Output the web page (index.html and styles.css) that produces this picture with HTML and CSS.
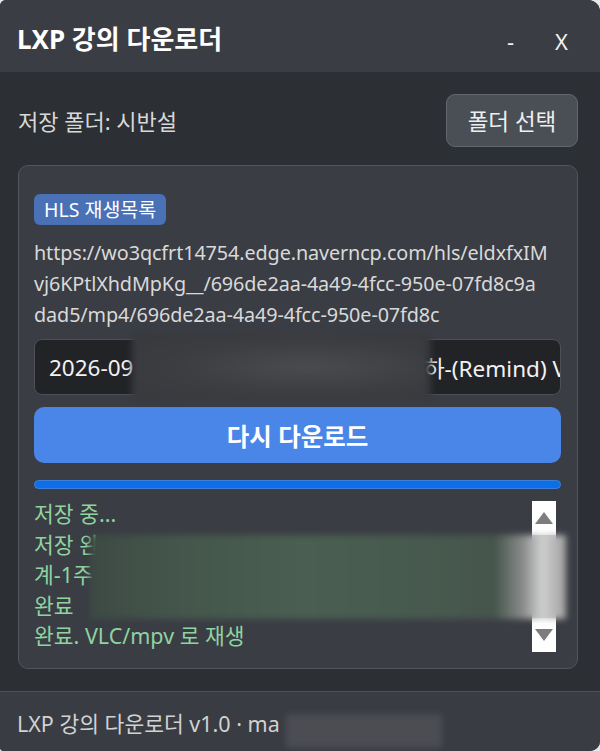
FILE: index.html
```html
<!DOCTYPE html>
<html lang="ko">
<head>
<meta charset="utf-8">
<link rel="stylesheet" href="styles.css">
</head>
<body>
<div class="window">
  <div class="titlebar">
    <div class="title">LXP 강의 다운로더</div>
    <div class="controls">
      <span class="ctl min">-</span>
      <span class="ctl close">X</span>
    </div>
  </div>
  <div class="main">
    <div class="folder-row">
      <div class="folder-label">저장 폴더: 시반설</div>
      <button class="folder-btn">폴더 선택</button>
    </div>
    <div class="card">
      <div class="badge">HLS 재생목록</div>
      <div class="url">
        <div class="url-line">https://wo3qcfrt14754.edge.naverncp.com/hls/eldxfxIM</div>
        <div class="url-line">vj6KPtlXhdMpKg__/696de2aa-4a49-4fcc-950e-07fd8c9a</div>
        <div class="url-line">dad5/mp4/696de2aa-4a49-4fcc-950e-07fd8c</div>
      </div>
      <div class="input-wrap">
        <div class="input"><span class="in-left">2026-09</span><span class="in-right">하-(Remind) V</span></div>
        <div class="blur blur-input"></div>
      </div>
      <button class="primary">다시 다운로드</button>
      <div class="progress"></div>
      <div class="log">
        <div class="log-lines">
          <div class="log-line">저장 중...</div>
          <div class="log-line">저장 완</div>
          <div class="log-line">계-1주</div>
          <div class="log-line">완료</div>
          <div class="log-line">완료. VLC/mpv 로 재생</div>
        </div>
        <div class="scrollbar">
          <div class="sb-btn"><span class="tri up"></span></div>
          <div class="sb-track"></div>
          <div class="sb-btn"><span class="tri down"></span></div>
        </div>
        <div class="blur blur-log"></div>
      </div>
    </div>
  </div>
  <div class="footer">
    <span>LXP 강의 다운로더 v1.0 · ma</span>
    <div class="blur blur-foot"></div>
  </div>
</div>
</body>
</html>
```
FILE: styles.css
```css
html, body {
  margin: 0;
  padding: 0;
  width: 600px;
  height: 751px;
  background: #e6e6e6;
  overflow: hidden;
}
body {
  font-family: "Segoe UI", "Noto Sans", "Noto Sans CJK KR", sans-serif;
}
.window {
  width: 600px;
  height: 751px;
  display: flex;
  flex-direction: column;
  background: #2c2f34;
  border-radius: 6px 12px 10px 4px;
  overflow: hidden;
  position: relative;
}
.titlebar {
  height: 72px;
  flex: none;
  background: #3a3d44;
  display: flex;
  align-items: center;
  padding: 4px 33px 0 17px;
  box-sizing: border-box;
}
.title {
  color: #ffffff;
  font-weight: 700;
  font-size: 26px;
  flex: 1;
  white-space: nowrap;
}
.controls {
  display: flex;
  color: #f0f0f0;
  font-size: 22px;
  padding-top: 6px;
}
.ctl.min {
  width: 48px;
}
.ctl.close {
  width: 12px;
}
.main {
  flex: 1;
  display: flex;
  flex-direction: column;
  padding: 22px 22px 0 18px;
}
.folder-row {
  display: flex;
  align-items: center;
  justify-content: space-between;
}
.folder-label {
  color: #d8d8d8;
  font-size: 22px;
  padding-bottom: 2px;
}
.folder-btn {
  width: 132px;
  height: 53px;
  background: #4a4e55;
  border: 1px solid #62666d;
  border-radius: 9px;
  color: #eeeeee;
  font-family: inherit;
  font-size: 22.5px;
  padding: 0;
}
.card {
  margin-top: 18px;
  height: 504px;
  box-sizing: border-box;
  background: #3a3d44;
  border: 1px solid #52555c;
  border-radius: 10px;
  padding: 28px 16px 0 15px;
  display: flex;
  flex-direction: column;
}
.badge {
  align-self: flex-start;
  height: 31px;
  line-height: 31px;
  background: #4a70b6;
  color: #ffffff;
  font-size: 19.5px;
  padding: 0 10px;
  border-radius: 6px;
  white-space: nowrap;
}
.url {
  margin-top: 12px;
  color: #d9d9d9;
  font-size: 19.8px;
  line-height: 31px;
  letter-spacing: -0.1px;
}
.url-line {
  white-space: nowrap;
}
.input-wrap {
  position: relative;
  margin-top: 9px;
}
.input {
  height: 56px;
  box-sizing: border-box;
  background: #222327;
  border: 1px solid #4d5057;
  border-radius: 8px;
  display: flex;
  align-items: center;
  justify-content: space-between;
  padding: 0 0 0 14px;
  color: #f2f2f2;
  font-size: 22.5px;
  overflow: hidden;
  white-space: nowrap;
}
.in-right {
  margin-right: -6px;
}
.blur {
  position: absolute;
  filter: blur(3px);
}
.blur-input {
  left: 98px;
  top: -6px;
  width: 293px;
  height: 68px;
  background: radial-gradient(ellipse at 60% 50%, #4a4b4f 0%, #3c3d41 55%, #37393d 100%);
  box-shadow: 6px 0 0 #37393d;
}
.primary {
  margin-top: 12px;
  height: 56px;
  background: #4a85e8;
  border: none;
  border-radius: 10px;
  color: #ffffff;
  font-family: inherit;
  font-weight: 700;
  font-size: 24.5px;
  padding: 0;
}
.progress {
  margin-top: 17px;
  height: 9px;
  box-sizing: border-box;
  background: #0c6fe8;
  border: 1px solid #3f7fd8;
  border-radius: 5px;
}
.log {
  position: relative;
  margin-top: 12px;
  display: flex;
  height: 151px;
}
.log-lines {
  flex: 1;
  color: #8fd3a0;
  font-size: 21.5px;
  line-height: 30.5px;
  margin-top: -2px;
  white-space: nowrap;
}
.scrollbar {
  width: 24px;
  background: #ffffff;
  display: flex;
  flex-direction: column;
  margin-right: 5px;
}
.sb-btn {
  height: 34px;
  display: flex;
  align-items: center;
  justify-content: center;
}
.sb-track {
  flex: 1;
  background: #c8c8c8;
}
.tri {
  width: 0;
  height: 0;
  border-left: 9px solid transparent;
  border-right: 9px solid transparent;
}
.tri.up {
  border-bottom: 12px solid #7d7d7d;
}
.tri.down {
  border-top: 12px solid #7d7d7d;
}
.blur-log {
  left: 56px;
  top: 34px;
  width: 476px;
  height: 84px;
  background: linear-gradient(90deg, #3d4a44 0%, #45574c 20%, #4a5e51 45%, #485a4f 70%, #46554c 85%, #8a8c8c 91%, #d0d0d0 95%, #a0a0a0 100%);
}
.footer {
  height: 60px;
  flex: none;
  box-sizing: border-box;
  border-top: 1px solid #4d5057;
  background: #393c43;
  color: #d2d2d2;
  font-size: 21.5px;
  display: flex;
  align-items: center;
  padding: 2px 0 0 17px;
  position: relative;
  white-space: nowrap;
}
.blur-foot {
  left: 286px;
  top: 22px;
  width: 156px;
  height: 34px;
  background: #4b4d53;
}
```
